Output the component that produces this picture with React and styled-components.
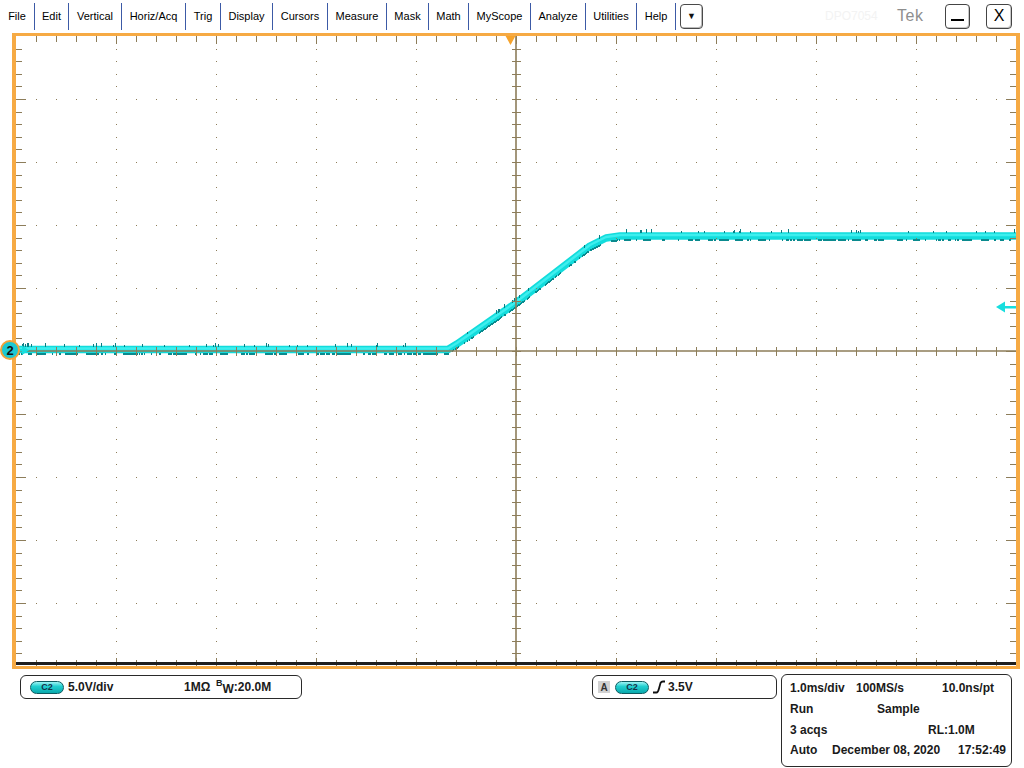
import React, { useMemo } from "react";
import styled, { createGlobalStyle } from "styled-components";

const GlobalStyle = createGlobalStyle`
  html, body {
    margin: 0;
    padding: 0;
    background: #fff;
    overflow: hidden;
  }
  body {
    font-family: "Liberation Sans", Arial, sans-serif;
  }
`;

const W = 1000;
const H = 630;
const GRID = "#8d7d5a";

// menu widths measured between the blue separators
const menus = [
  ["File", 34],
  ["Edit", 33],
  ["Vertical", 52],
  ["Horiz/Acq", 63],
  ["Trig", 34],
  ["Display", 51],
  ["Cursors", 54],
  ["Measure", 58],
  ["Mask", 41],
  ["Math", 39],
  ["MyScope", 61],
  ["Analyze", 54],
  ["Utilities", 50],
  ["Help", 38],
];

const tracePts = [
  [0, 313.5],
  [432, 313.5],
  [441, 308],
  [500, 267],
  [574, 210],
  [590, 202],
  [604, 200],
  [1000, 200],
];

function traceY(x) {
  for (let i = 1; i < tracePts.length; i++) {
    const [x0, y0] = tracePts[i - 1];
    const [x1, y1] = tracePts[i];
    if (x <= x1) return y0 + ((x - x0) / (x1 - x0)) * (y1 - y0);
  }
  return 200;
}

function makeRand(seed) {
  let s = seed;
  return () => {
    s = (s * 1103515245 + 12345) & 0x7fffffff;
    return s / 0x7fffffff;
  };
}

function buildGrid() {
  let dots = "";
  let ticks = "";
  for (let vx = 100; vx < W; vx += 100) {
    if (vx === 500) continue;
    for (let k = 1; k < 50; k++) {
      const y = Math.round(k * 12.6);
      dots += `M${vx} ${y}h1v1h-1z`;
    }
  }
  for (let hy = 63; hy < H; hy += 63) {
    if (hy === 315) continue;
    for (let k = 1; k < 50; k++) {
      dots += `M${k * 20} ${hy}h1v1h-1z`;
    }
  }
  for (let k = 1; k < 50; k++) {
    const x = k * 20 + 0.5;
    const len = k % 5 === 0 ? 8 : 6;
    ticks += `M${x} 0V${len}M${x} ${H}V${H - len}`;
    ticks += `M${x} 311V320`;
  }
  for (let k = 1; k < 50; k++) {
    const y = Math.round(k * 12.6) + 0.5;
    const len = k % 5 === 0 ? 10 : 6;
    ticks += `M0 ${y}H${len}M${W} ${y}H${W - len}`;
    ticks += `M496 ${y}H505`;
  }
  return { dots, ticks };
}

function buildNoise() {
  const rand = makeRand(7);
  let low = "";
  let high = "";
  let on = true;
  for (let x = 0; x < W; x++) {
    const y = Math.round(traceY(x));
    if (rand() < 0.22) on = !on;
    if (on) low += `M${x} ${y + 3}h1v2h-1z`;
    if (rand() < 0.08) {
      const h = 2 + Math.floor(rand() * 3);
      high += `M${x} ${y - 3 - h}h1v${h}h-1z`;
    }
  }
  return { low, high };
}

function Scope() {
  const grid = useMemo(buildGrid, []);
  const noise = useMemo(buildNoise, []);
  const line = tracePts.map((p) => p.join(",")).join(" ");
  return (
    <svg width={W} height={H} style={{ display: "block" }}>
      <polyline
        points={line}
        fill="none"
        stroke="#12dcdc"
        strokeWidth="7.5"
        strokeLinejoin="round"
      />
      <polyline
        points={tracePts.map(([x, y]) => `${x},${y - 1}`).join(" ")}
        fill="none"
        stroke="#3eeeee"
        strokeWidth="2.5"
        strokeLinejoin="round"
      />
      <path d={noise.low} fill="#0a8a8e" />
      <path d={noise.high} fill="#0b7e84" />

      <path d={grid.dots} fill={GRID} />
      <path d={grid.ticks} stroke={GRID} strokeWidth="1" fill="none" />
      <path d="M500 0V630M0 315H1000" stroke={GRID} strokeWidth="1.6" />
      <rect x="0" y="626" width={W} height="3" fill="#1e1e1e" />

      {/* trigger position */}
      <polygon points="489,-1 500,-1 494.5,9" fill="#f6a32c" />
      {/* trigger level */}
      <polygon points="980,271 989,265.5 989,276.5" fill="#18dede" />
      <rect x="986" y="270" width="14" height="2.5" fill="#18dede" />
      {/* channel 2 ground */}
      <rect x="3" y="313" width="7" height="2.5" fill="#18dede" />
      <polygon points="13,314.2 6,309.5 6,319" fill="#18dede" />
    </svg>
  );
}

export default function App() {
  return (
    <>
      <GlobalStyle />
      <Screen>
        <MenuBar>
          {menus.map(([label, w]) => (
            <React.Fragment key={label}>
              <MenuItem $w={w}>{label}</MenuItem>
              <Sep />
            </React.Fragment>
          ))}
          <DropBtn>▼</DropBtn>
          <RightGroup>
            <Model>DPO7054</Model>
            <TekLogo>Tek</TekLogo>
            <WinBtn $ml={22}>
              <MinBar />
            </WinBtn>
            <WinBtn $ml={16} $w={26}>X</WinBtn>
          </RightGroup>
        </MenuBar>

        <Plot>
          <Scope />
          <ChannelMarker>2</ChannelMarker>
        </Plot>

        <Bottom>
          <ChannelBox>
            <Pill>C2</Pill>
            <Cell $w={116} $ml={4}>5.0V/div</Cell>
            <Cell $w={32}>1MΩ</Cell>
            <Bw>
              <BwSup>B</BwSup>
              <BwSub>W</BwSub>:20.0M
            </Bw>
          </ChannelBox>

          <TriggerBox>
            <SourceTag>A</SourceTag>
            <Pill $ml={5}>C2</Pill>
            <EdgeIcon width="14" height="14" viewBox="0 0 14 14">
              <path
                d="M1 12.5H4.5Q6 12.5 7 8.5L8.5 3Q9.3 1.5 11 1.5H13"
                fill="none"
                stroke="#111"
                strokeWidth="1.8"
              />
            </EdgeIcon>
            <Cell $ml={2}>3.5V</Cell>
          </TriggerBox>

          <TimeBox>
            <TRow>
              <Cell $w={66}>1.0ms/div</Cell>
              <Cell $w={86}>100MS/s</Cell>
              <Cell>10.0ns/pt</Cell>
            </TRow>
            <TRow>
              <Cell $w={87}>Run</Cell>
              <Cell>Sample</Cell>
            </TRow>
            <TRow>
              <Cell $w={138}>3 acqs</Cell>
              <Cell>RL:1.0M</Cell>
            </TRow>
            <TRow>
              <Cell $w={42}>Auto</Cell>
              <Cell $w={126}>December 08, 2020</Cell>
              <Cell>17:52:49</Cell>
            </TRow>
          </TimeBox>
        </Bottom>
      </Screen>
    </>
  );
}

const Screen = styled.div`
  width: 1024px;
  height: 768px;
  display: flex;
  flex-direction: column;
  background: #fff;
`;

const MenuBar = styled.div`
  display: flex;
  align-items: center;
  height: 32px;
  padding-bottom: 1px;
  flex: none;
  font-family: "Liberation Sans", Arial, sans-serif;
  font-size: 11px;
  color: #000;
`;

const MenuItem = styled.div`
  width: ${(p) => p.$w}px;
  flex: none;
  text-align: center;
  white-space: nowrap;
`;

const Sep = styled.div`
  width: 1px;
  height: 27px;
  flex: none;
  background: #3c5aa6;
`;

const DropBtn = styled.div`
  margin-left: 4px;
  width: 23px;
  height: 25px;
  box-sizing: border-box;
  border: 1px solid #4a4a4a;
  border-radius: 4px;
  display: flex;
  align-items: center;
  justify-content: center;
  font-size: 9px;
  color: #111;
  box-shadow: inset -1px -1px 0 #bbb;
`;

const RightGroup = styled.div`
  display: flex;
  align-items: center;
  margin-left: 122px;
`;

const Model = styled.div`
  width: 55px;
  font-size: 12px;
  color: #f3f3f3;
  white-space: nowrap;
`;

const TekLogo = styled.div`
  width: 26px;
  margin-left: 17px;
  font-size: 16px;
  color: #8e8e8e;
  letter-spacing: 0.5px;
`;

const WinBtn = styled.div`
  margin-left: ${(p) => p.$ml}px;
  width: ${(p) => p.$w || 25}px;
  height: 25px;
  box-sizing: border-box;
  border: 1px solid #444;
  border-radius: 4px;
  display: flex;
  align-items: center;
  justify-content: center;
  font-size: 16px;
  color: #000;
  box-shadow: inset -1px -1px 0 #c8c8c8;
`;

const MinBar = styled.div`
  width: 13px;
  height: 2px;
  background: #000;
  margin-top: 7px;
`;

const Plot = styled.div`
  position: relative;
  flex: none;
  margin-left: 12px;
  width: 1008px;
  height: 636px;
  box-sizing: border-box;
  border-style: solid;
  border-color: #f6aa44;
  border-width: 3px 4px 3px 4px;
  background: #fff;
`;

const ChannelMarker = styled.div`
  position: absolute;
  left: -16px;
  top: 304px;
  width: 20px;
  height: 20px;
  box-sizing: border-box;
  border-radius: 50%;
  border: 2px solid #f2a23a;
  background: #1cc8d2;
  display: flex;
  align-items: center;
  justify-content: center;
  font-size: 13px;
  font-weight: bold;
  color: #111;
`;

const Bottom = styled.div`
  display: flex;
  align-items: flex-start;
  padding: 6px 0 0 20px;
  font-family: "Liberation Sans", Arial, sans-serif;
  font-size: 12px;
  font-weight: bold;
  color: #1a1a1a;
`;

const BoxBase = styled.div`
  box-sizing: border-box;
  border: 1px solid #2a2a2a;
  border-radius: 6px;
  flex: none;
`;

const ChannelBox = styled(BoxBase)`
  width: 282px;
  height: 24px;
  display: flex;
  align-items: center;
  padding-left: 9px;
`;

const TriggerBox = styled(BoxBase)`
  margin-left: 290px;
  width: 185px;
  height: 24px;
  display: flex;
  align-items: center;
  padding-left: 5px;
`;

const TimeBox = styled(BoxBase)`
  margin-left: 4px;
  margin-top: -1px;
  width: 231px;
  height: 93px;
  padding: 3px 0 0 8px;
`;

const TRow = styled.div`
  display: flex;
  align-items: center;
  height: 20.7px;
  white-space: nowrap;
`;

const Cell = styled.span`
  flex: none;
  white-space: nowrap;
  width: ${(p) => (p.$w ? `${p.$w}px` : "auto")};
  margin-left: ${(p) => p.$ml || 0}px;
`;

const Pill = styled.span`
  flex: none;
  width: 34px;
  height: 13px;
  margin-left: ${(p) => p.$ml || 0}px;
  box-sizing: border-box;
  border: 1px solid #0d5b60;
  border-radius: 7px;
  background: linear-gradient(#9ff4f4 0%, #22d0d0 40%, #0aa8ac 100%);
  display: flex;
  align-items: center;
  justify-content: center;
  font-size: 9px;
  font-weight: bold;
  color: #15324a;
`;

const Bw = styled.span`
  display: flex;
  align-items: center;
  white-space: nowrap;
`;

const BwSup = styled.span`
  font-size: 9px;
  position: relative;
  top: -4px;
`;

const BwSub = styled.span`
  font-size: 12px;
  position: relative;
  top: 2px;
`;

const SourceTag = styled.span`
  flex: none;
  width: 12px;
  height: 12px;
  background: #d2d2d2;
  display: flex;
  align-items: center;
  justify-content: center;
  font-size: 10px;
  color: #333;
`;

const EdgeIcon = styled.svg`
  flex: none;
  margin-left: 3px;
`;
